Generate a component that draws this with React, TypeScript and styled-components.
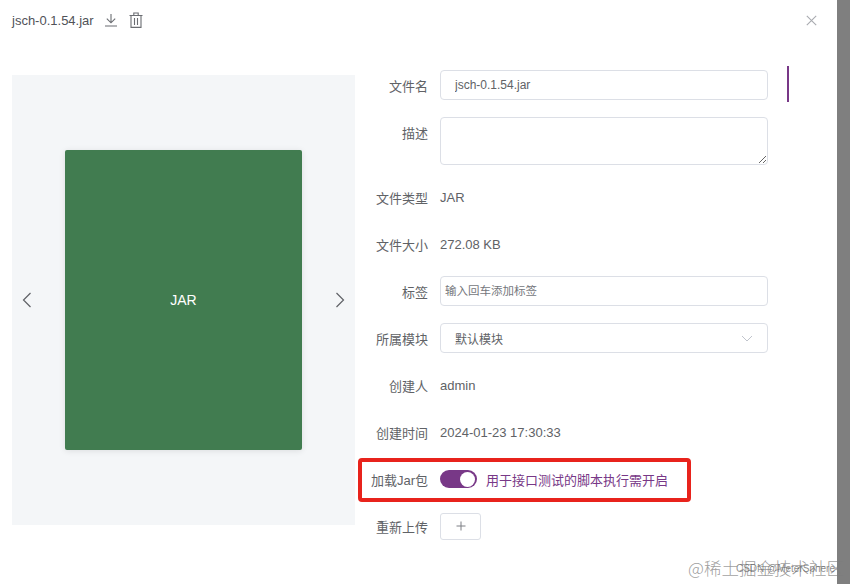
import React, { useState } from 'react';
import styled, { createGlobalStyle } from 'styled-components';

const GlobalStyle = createGlobalStyle`
  html, body {
    margin: 0;
    padding: 0;
    overflow: hidden;
  }
  * {
    box-sizing: border-box;
  }
  body {
    font-family: "Liberation Sans", "Noto Sans CJK SC", sans-serif;
    color: #606266;
  }
`;

const Page = styled.div`
  position: relative;
  display: flex;
  width: 850px;
  height: 584px;
  overflow: hidden;
`;

const Drawer = styled.div`
  width: 837px;
  height: 100%;
  background: #fff;
`;

const Backdrop = styled.div`
  flex: 1;
  background: #7f7f7f;
`;

const Header = styled.header`
  display: flex;
  align-items: center;
  height: 38px;
  padding: 2px 20px 0 12px;
`;

const Title = styled.span`
  font-size: 13px;
  color: #505258;
  margin-right: 10px;
`;

const IconButton = styled.button`
  display: flex;
  padding: 0;
  margin-right: 11px;
  border: none;
  background: none;
  color: #6b6d72;
  cursor: pointer;
`;

const CloseButton = styled(IconButton)`
  margin: 0 0 0 auto;
  color: #a9abb0;
`;

const Body = styled.div`
  display: flex;
  align-items: flex-start;
  padding-left: 12px;
`;

const Preview = styled.div`
  display: flex;
  align-items: center;
  justify-content: space-between;
  width: 343px;
  height: 450px;
  margin-top: 37px;
  padding: 0 10px;
  background: #f4f6f8;
`;

const Arrow = styled.button`
  display: flex;
  padding: 0;
  border: none;
  background: none;
  color: #5f6166;
  cursor: pointer;
`;

const FileCard = styled.div`
  display: flex;
  align-items: center;
  justify-content: center;
  width: 237px;
  height: 300px;
  border-radius: 2px;
  background: #417c50;
  box-shadow: 0 1px 6px rgba(0, 0, 0, 0.1);
  color: #fff;
  font-size: 14px;
`;

const Form = styled.div`
  display: flex;
  flex-direction: column;
  gap: 17px;
  width: 413px;
  margin-top: 32px;
`;

const Row = styled.div<{ $top?: boolean }>`
  display: grid;
  grid-template-columns: 73px 328px;
  column-gap: 12px;
  align-items: ${props => (props.$top ? 'flex-start' : 'center')};
  min-height: 30px;
`;

const Label = styled.label<{ $top?: boolean }>`
  text-align: right;
  font-size: 13px;
  white-space: nowrap;
  color: #606266;
  padding-top: ${props => (props.$top ? '6px' : '0')};
`;

const Value = styled.span`
  font-size: 13px;
  color: #606266;
`;

const TextInput = styled.input<{ $inset?: number }>`
  width: 100%;
  height: 30px;
  padding: 0 ${props => props.$inset ?? 14}px;
  border: 1px solid #dcdfe6;
  border-radius: 4px;
  outline: none;
  font-family: inherit;
  font-size: 12px;
  color: #606266;

  &::placeholder {
    font-size: 11.5px;
    color: #75777c;
  }
`;

const TextArea = styled.textarea`
  display: block;
  width: 100%;
  height: 48px;
  border: 1px solid #dcdfe6;
  border-radius: 4px;
  outline: none;
  resize: vertical;
`;

const SelectBox = styled.div`
  display: flex;
  align-items: center;
  justify-content: space-between;
  height: 30px;
  padding: 0 14px;
  border: 1px solid #dcdfe6;
  border-radius: 4px;
  font-size: 12px;
  color: #606266;

  svg {
    color: #c0c4cc;
  }
`;

const SwitchLine = styled.div`
  display: flex;
  align-items: center;
  gap: 9px;
`;

const SwitchTrack = styled.button<{ $on: boolean }>`
  display: flex;
  justify-content: ${props => (props.$on ? 'flex-end' : 'flex-start')};
  align-items: center;
  width: 37px;
  height: 18px;
  padding: 2px;
  border: none;
  border-radius: 9px;
  background: ${props => (props.$on ? '#783887' : '#dcdfe6')};
  cursor: pointer;
`;

const SwitchKnob = styled.span`
  width: 15px;
  height: 15px;
  border-radius: 50%;
  background: #fff;
`;

const SwitchHint = styled.span`
  font-size: 13px;
  color: #783887;
`;

const UploadButton = styled.button`
  display: flex;
  align-items: center;
  justify-content: center;
  width: 41px;
  height: 27px;
  padding: 0;
  border: 1px solid #dcdfe6;
  border-radius: 3px;
  background: #fff;
  color: #7d7f84;
  cursor: pointer;
`;

const AnchorBar = styled.div`
  width: 2px;
  height: 36px;
  margin: 28px 0 0 19px;
  background: #783887;
`;

/* red annotation frame drawn over the screenshot */
const Highlight = styled.div`
  position: absolute;
  left: 358px;
  top: 458px;
  width: 333px;
  height: 44px;
  border: 4px solid #e8231c;
  border-radius: 4px;
  pointer-events: none;
`;

const Watermark = styled.div`
  position: absolute;
  right: 6px;
  bottom: 5px;
  font-family: "Noto Sans CJK SC", sans-serif;
  font-size: 17.5px;
  font-weight: 300;
  line-height: 22px;
  white-space: nowrap;
  color: rgba(125, 125, 125, 0.75);
`;

const WatermarkSmall = styled.div`
  position: absolute;
  right: 15px;
  bottom: 9px;
  font-size: 10px;
  line-height: 12px;
  white-space: nowrap;
  color: rgba(90, 90, 90, 0.7);
`;

const DownloadIcon = () => (
  <svg width="14" height="14" viewBox="0 0 14 14" fill="none" stroke="currentColor" strokeWidth="1.1">
    <path d="M7 1v8.6M2.8 5.6 7 9.8l4.2-4.2M1 13h12" />
  </svg>
);

const TrashIcon = () => (
  <svg width="14" height="16" viewBox="0 0 14 16" fill="none" stroke="currentColor" strokeWidth="1.1">
    <path d="M0.5 3.5h13M4.8 3.5V1h4.4v2.5M2 3.5v11.9h10V3.5M5.5 6v7M8.5 6v7" />
  </svg>
);

const CloseIcon = () => (
  <svg width="11" height="11" viewBox="0 0 11 11" fill="none" stroke="currentColor" strokeWidth="1.1">
    <path d="M0.8 0.8l9.4 9.4M10.2 0.8l-9.4 9.4" />
  </svg>
);

const ChevronIcon = ({ flip }: { flip?: boolean }) => (
  <svg width="10" height="16" viewBox="0 0 10 16" fill="none" stroke="currentColor" strokeWidth="1.2">
    <path d={flip ? 'M1.5 1l7 7-7 7' : 'M8.5 1l-7 7 7 7'} />
  </svg>
);

const CaretIcon = () => (
  <svg width="12" height="7" viewBox="0 0 12 7" fill="none" stroke="currentColor" strokeWidth="1">
    <path d="M1 1l5 5 5-5" />
  </svg>
);

const PlusIcon = () => (
  <svg width="10" height="10" viewBox="0 0 10 10" fill="none" stroke="currentColor" strokeWidth="1">
    <path d="M5 0.5v9M0.5 5h9" />
  </svg>
);

const App: React.FC = () => {
  const [loadJar, setLoadJar] = useState(true);

  return (
    <Page>
      <GlobalStyle />
      <Drawer>
        <Header>
          <Title>jsch-0.1.54.jar</Title>
          <IconButton aria-label="download"><DownloadIcon /></IconButton>
          <IconButton aria-label="delete"><TrashIcon /></IconButton>
          <CloseButton aria-label="close"><CloseIcon /></CloseButton>
        </Header>
        <Body>
          <Preview>
            <Arrow aria-label="previous"><ChevronIcon /></Arrow>
            <FileCard>JAR</FileCard>
            <Arrow aria-label="next"><ChevronIcon flip /></Arrow>
          </Preview>
          <Form>
            <Row>
              <Label>文件名</Label>
              <TextInput defaultValue="jsch-0.1.54.jar" />
            </Row>
            <Row $top>
              <Label $top>描述</Label>
              <TextArea />
            </Row>
            <Row>
              <Label>文件类型</Label>
              <Value>JAR</Value>
            </Row>
            <Row>
              <Label>文件大小</Label>
              <Value>272.08 KB</Value>
            </Row>
            <Row>
              <Label>标签</Label>
              <TextInput $inset={4} placeholder="输入回车添加标签" />
            </Row>
            <Row>
              <Label>所属模块</Label>
              <SelectBox>
                默认模块
                <CaretIcon />
              </SelectBox>
            </Row>
            <Row>
              <Label>创建人</Label>
              <Value>admin</Value>
            </Row>
            <Row>
              <Label>创建时间</Label>
              <Value>2024-01-23 17:30:33</Value>
            </Row>
            <Row>
              <Label>加载Jar包</Label>
              <SwitchLine>
                <SwitchTrack $on={loadJar} onClick={() => setLoadJar(v => !v)}>
                  <SwitchKnob />
                </SwitchTrack>
                <SwitchHint>用于接口测试的脚本执行需开启</SwitchHint>
              </SwitchLine>
            </Row>
            <Row>
              <Label>重新上传</Label>
              <UploadButton aria-label="upload"><PlusIcon /></UploadButton>
            </Row>
          </Form>
          <AnchorBar />
        </Body>
      </Drawer>
      <Backdrop />
      <Highlight />
      <Watermark>@稀土掘金技术社区</Watermark>
      <WatermarkSmall>CSDN @MeterSphere</WatermarkSmall>
    </Page>
  );
};

export default App;
